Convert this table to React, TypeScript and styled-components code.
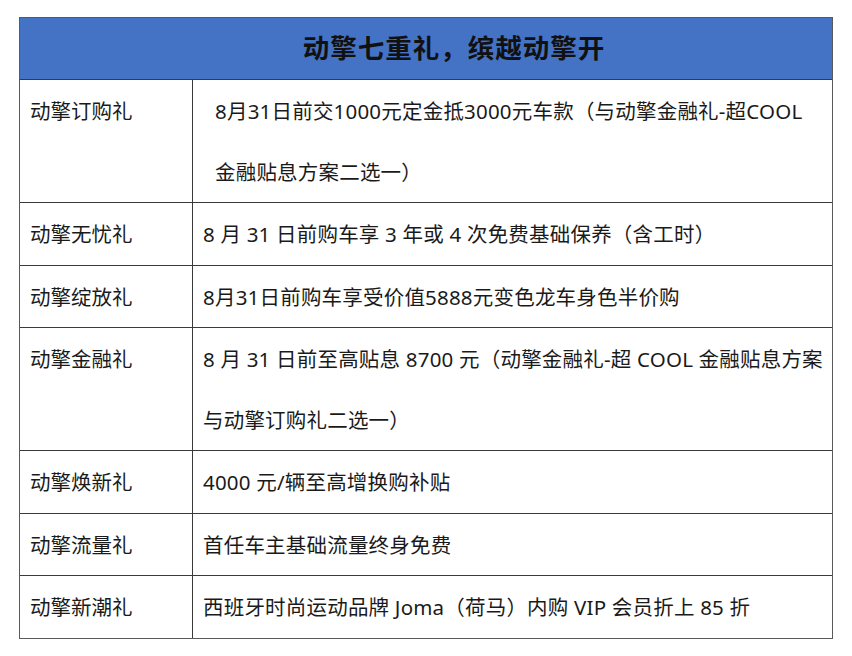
import React from 'react';
import styled, { createGlobalStyle } from 'styled-components';

const rows: { name: string; lines: string[]; indent?: boolean }[] = [
  {
    name: '动擎订购礼',
    lines: ['8月31日前交1000元定金抵3000元车款（与动擎金融礼-超COOL', '金融贴息方案二选一）'],
    indent: true,
  },
  { name: '动擎无忧礼', lines: ['8 月 31 日前购车享 3 年或 4 次免费基础保养（含工时）'] },
  { name: '动擎绽放礼', lines: ['8月31日前购车享受价值5888元变色龙车身色半价购'] },
  {
    name: '动擎金融礼',
    lines: ['8 月 31 日前至高贴息 8700 元（动擎金融礼-超 COOL 金融贴息方案', '与动擎订购礼二选一）'],
  },
  { name: '动擎焕新礼', lines: ['4000 元/辆至高增换购补贴'] },
  { name: '动擎流量礼', lines: ['首任车主基础流量终身免费'] },
  { name: '动擎新潮礼', lines: ['西班牙时尚运动品牌 Joma（荷马）内购 VIP 会员折上 85 折'] },
];

const App: React.FC<{}> = () => {
  return (
    <>
      <GlobalStyle />
      <Page>
        <Table>
          <Header>动擎七重礼，缤越动擎开</Header>
          {rows.map((row) => (
            <React.Fragment key={row.name}>
              <NameCell>{row.name}</NameCell>
              <DetailCell $indent={row.indent}>
                {row.lines.map((line, i) => (
                  <Line key={i}>{line}</Line>
                ))}
              </DetailCell>
            </React.Fragment>
          ))}
        </Table>
      </Page>
    </>
  );
};

export default App;

const GlobalStyle = createGlobalStyle`
  body {
    margin: 0;
    background: #fff;
    font-family: "Noto Sans", "Noto Sans CJK SC", sans-serif;
  }
`;

const Page = styled.div`
  padding: 17px 0 0 19px;
`;

const Table = styled.div`
  display: grid;
  grid-template-columns: 172px 1fr;
  gap: 1px;
  width: 814px;
  background: #3a3a3a;
  border: 1px solid #5a5a5a;
  box-sizing: border-box;
`;

const Header = styled.div`
  grid-column: 1 / span 2;
  background: #4472c4;
  color: #111;
  text-align: center;
  font-size: 26.5px;
  font-weight: 700;
  letter-spacing: 1px;
  line-height: 61px;
  padding-left: 56px;
`;

const NameCell = styled.div`
  background: #fff;
  color: #1a1a1a;
  font-size: 20.5px;
  line-height: 60.5px;
  padding: 1px 0 0 10px;
`;

const DetailCell = styled.div<{ $indent?: boolean }>`
  background: #fff;
  color: #1a1a1a;
  font-size: 20.5px;
  letter-spacing: 0.2px;
  line-height: 60.5px;
  padding: 1px 0 0 ${(p) => (p.$indent ? '22px' : '10px')};
`;

const Line = styled.div`
  white-space: nowrap;
`;
